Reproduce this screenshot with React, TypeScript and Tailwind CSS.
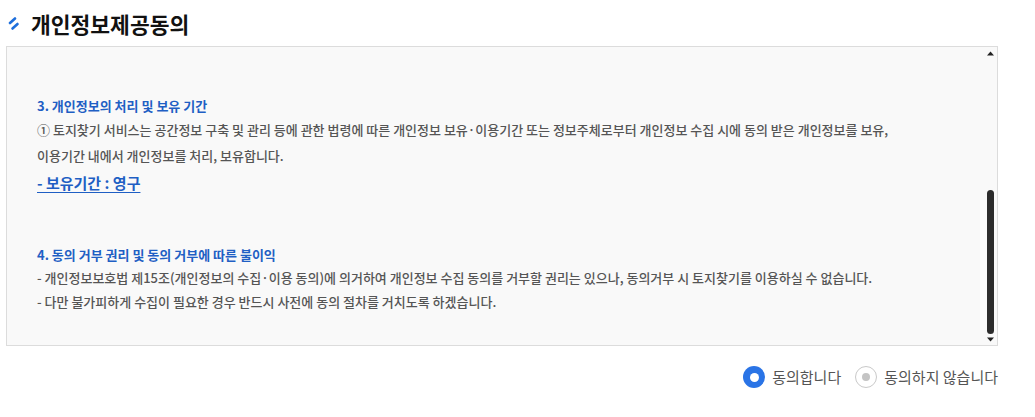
import { useState } from 'react'

const font = { fontFamily: '"Noto Sans CJK KR", "Noto Sans", sans-serif' }

function TitleIcon() {
  return (
    <svg width="12" height="14" viewBox="0 0 12 14" className="shrink-0">
      <line x1="7" y1="1.5" x2="2" y2="6" stroke="#1e6fdc" strokeWidth="2.6" strokeLinecap="round" />
      <line x1="9.5" y1="7" x2="4.5" y2="11.5" stroke="#1e6fdc" strokeWidth="2.6" strokeLinecap="round" />
    </svg>
  )
}

function Radio({ checked, label, onClick }: { checked: boolean; label: string; onClick: () => void }) {
  return (
    <button type="button" onClick={onClick} className="flex items-center gap-[7px] cursor-pointer">
      {checked ? (
        <span className="flex items-center justify-center w-[22px] h-[22px] rounded-full bg-[#2a74e6]">
          <span className="w-[9px] h-[9px] rounded-full bg-white"></span>
        </span>
      ) : (
        <span className="flex items-center justify-center w-[22px] h-[22px] rounded-full border border-[#c9c9c9] bg-white">
          <span className="w-[8px] h-[8px] rounded-full bg-[#c4c4c4]"></span>
        </span>
      )}
      <span className="text-[15px] text-[#555]">{label}</span>
    </button>
  )
}

export default function App() {
  const [agree, setAgree] = useState(true)

  return (
    <div className="w-[1035px] h-[417px] bg-white" style={font}>
      <div className="flex items-center gap-[11px] pl-[8px] pt-[4px] h-[44px]">
        <TitleIcon />
        <h2 className="text-[21.5px] font-bold text-[#111]">개인정보제공동의</h2>
      </div>

      <div className="relative ml-[6px] mt-[2px] w-[992px] h-[300px] border border-[#dcdcdc] bg-[#f9f9f9]">
        <div className="pl-[30px] pt-[48px] text-[13px] font-medium text-[#555]">
          <p className="font-bold text-[#1f5fc4] leading-[22px]">3. 개인정보의 처리 및 보유 기간</p>
          <p className="leading-[26px]">
            ① 토지찾기 서비스는 공간정보 구축 및 관리 등에 관한 법령에 따른 개인정보 보유·이용기간 또는 정보주체로부터 개인정보 수집 시에 동의 받은 개인정보를 보유,
          </p>
          <p className="leading-[26px]">이용기간 내에서 개인정보를 처리, 보유합니다.</p>
          <p className="mt-[1px] text-[15px] font-bold text-[#1f5fc4] underline underline-offset-[3px] leading-[26px]">
            - 보유기간 : 영구
          </p>

          <p className="mt-[48px] font-bold text-[#1f5fc4] leading-[22px]">4. 동의 거부 권리 및 동의 거부에 따른 불이익</p>
          <p className="leading-[24px]">
            - 개인정보보호법 제15조(개인정보의 수집·이용 동의)에 의거하여 개인정보 수집 동의를 거부할 권리는 있으나, 동의거부 시 토지찾기를 이용하실 수 없습니다.
          </p>
          <p className="leading-[24px]">- 다만 불가피하게 수집이 필요한 경우 반드시 사전에 동의 절차를 거치도록 하겠습니다.</p>
        </div>

        {/* custom scrollbar */}
        <div className="absolute right-[1px] top-0 bottom-0 w-[12px] flex flex-col items-center">
          <svg width="7" height="5" viewBox="0 0 7 5" className="mt-[4px]">
            <path d="M0 4.5 L3.5 0.5 L7 4.5 Z" fill="#222" />
          </svg>
          <div className="mt-[134px] w-[7px] h-[144px] rounded-full bg-[#2b2b2b]"></div>
          <svg width="7" height="5" viewBox="0 0 7 5" className="mt-[3px]">
            <path d="M0 0.5 L3.5 4.5 L7 0.5 Z" fill="#222" />
          </svg>
        </div>
      </div>

      <div className="flex justify-end items-center gap-[14px] pr-[37px] mt-[20px]">
        <Radio checked={agree} label="동의합니다" onClick={() => setAgree(true)} />
        <Radio checked={!agree} label="동의하지 않습니다" onClick={() => setAgree(false)} />
      </div>
    </div>
  )
}
